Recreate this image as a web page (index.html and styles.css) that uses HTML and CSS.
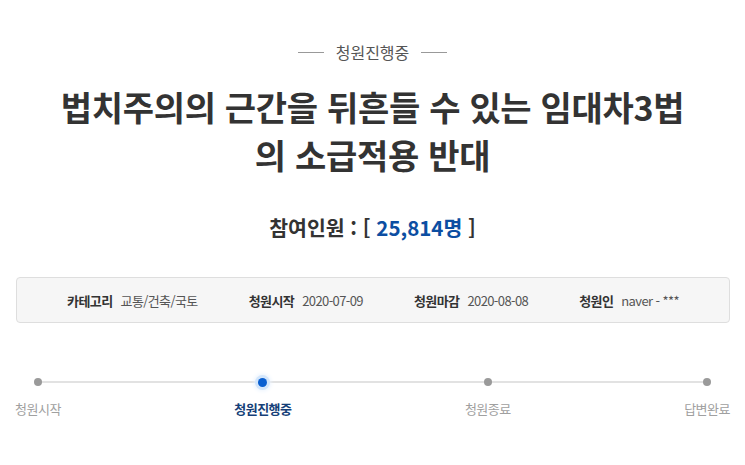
FILE: index.html
```html
<!DOCTYPE html>
<html lang="ko">
<head>
<meta charset="utf-8">
<link rel="stylesheet" href="styles.css">
</head>
<body>
<div class="page">
  <div class="status"><span class="dash"></span><span class="status-text">청원진행중</span><span class="dash"></span></div>
  <h1 class="title">법치주의의 근간을 뒤흔들 수 있는 임대차3법<br>의 소급적용 반대</h1>
  <div class="count">참여인원 : [ <span class="num">25,814명</span> ]</div>
  <div class="info">
    <div class="item"><span class="label">카테고리</span><span class="value">교통/건축/국토</span></div>
    <div class="item"><span class="label">청원시작</span><span class="value">2020-07-09</span></div>
    <div class="item"><span class="label">청원마감</span><span class="value">2020-08-08</span></div>
    <div class="item"><span class="label">청원인</span><span class="value">naver - ***</span></div>
  </div>
  <div class="progress">
    <div class="step"><span class="dot"></span><span class="step-label">청원시작</span></div>
    <div class="step active"><span class="dot"></span><span class="step-label">청원진행중</span></div>
    <div class="step"><span class="dot"></span><span class="step-label">청원종료</span></div>
    <div class="step"><span class="dot"></span><span class="step-label">답변완료</span></div>
  </div>
</div>
</body>
</html>
```
FILE: styles.css
```css
html, body {
  margin: 0;
  padding: 0;
  background: #fff;
}
body {
  font-family: "Noto Sans CJK KR", "Noto Sans", sans-serif;
  color: #333;
}
.page {
  padding: 0 15px;
}
.status {
  margin-top: 42px;
  height: 20px;
  display: flex;
  align-items: center;
  justify-content: center;
  gap: 12px;
}
.dash {
  width: 26px;
  height: 1px;
  background: #999;
}
.status-text {
  font-size: 16px;
  line-height: 20px;
  color: #555;
}
.title {
  margin: 21px 0 0;
  text-align: center;
  font-size: 34px;
  line-height: 48px;
  font-weight: 700;
  color: #333;
  letter-spacing: -0.3px;
}
.count {
  margin-top: 36px;
  text-align: center;
  font-size: 20.5px;
  line-height: 24px;
  font-weight: 700;
  color: #333;
}
.num {
  color: #0c4ea2;
}
.info {
  margin: 38px 0 0 1px;
  height: 44px;
  border: 1px solid #dedede;
  border-radius: 4px;
  background: #f6f6f6;
  display: flex;
  align-items: center;
  justify-content: center;
  gap: 51px;
}
.item {
  display: flex;
  align-items: center;
  gap: 8px;
  font-size: 13px;
  letter-spacing: -0.6px;
}
.label {
  font-weight: 700;
  color: #333;
}
.value {
  color: #555;
}
.progress {
  position: relative;
  margin-top: 51px;
  display: flex;
  justify-content: space-between;
}
.progress::before {
  content: "";
  position: absolute;
  left: 23px;
  right: 23px;
  top: 7px;
  height: 2px;
  background: #e2e2e2;
}
.step {
  position: relative;
  display: flex;
  flex-direction: column;
  align-items: center;
}
.dot {
  width: 8px;
  height: 8px;
  margin: 4px 0;
  border-radius: 50%;
  background: #9a9a9a;
}
.step.active .dot {
  width: 9px;
  height: 9px;
  margin: 3.5px 0;
  background: #0a5fd0;
  box-shadow: 0 0 0 3px #d3e6fb, 0 0 4px 4px #e9f2fd;
}
.step-label {
  margin-top: 10px;
  font-size: 13px;
  line-height: 18px;
  color: #a0a0a0;
  letter-spacing: -0.5px;
}
.step.active .step-label {
  font-weight: 700;
  color: #163f78;
}
```
